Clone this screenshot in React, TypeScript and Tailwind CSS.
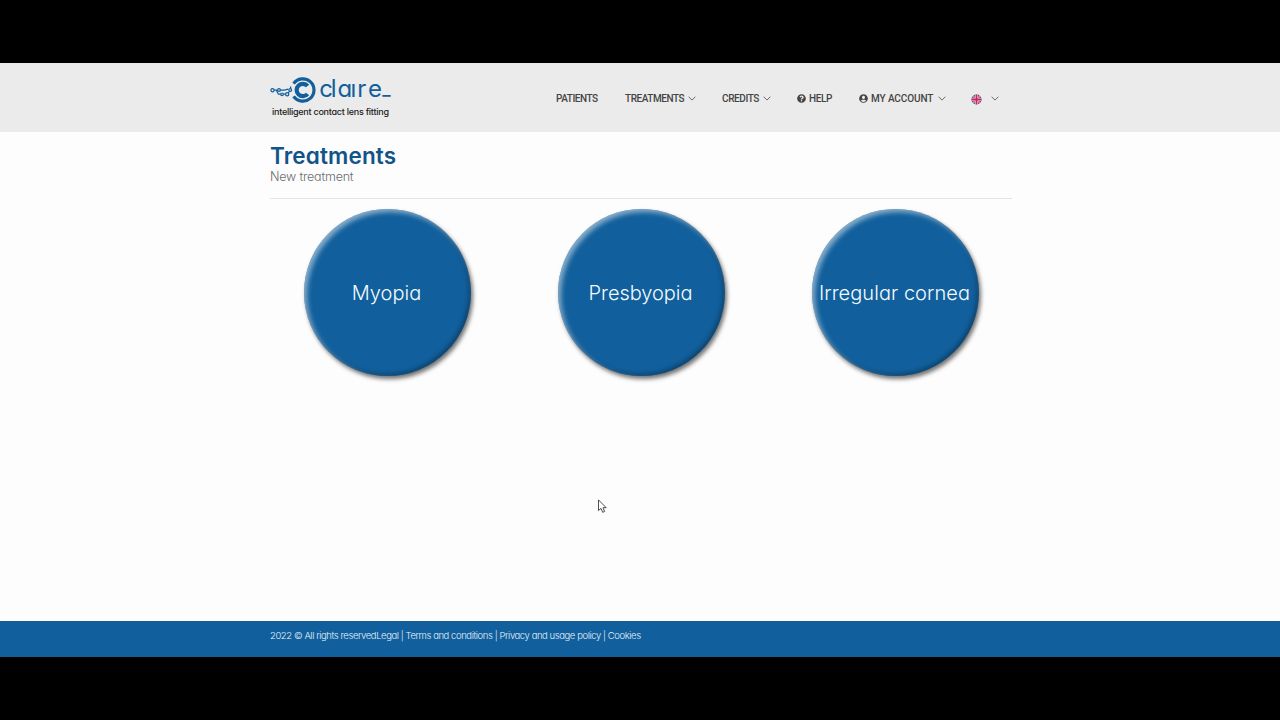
import { FaQuestionCircle, FaUserCircle } from "react-icons/fa";

const treatments = [
  { name: "Myopia", className: "tracking-[0px]" },
  { name: "Presbyopia", className: "tracking-[-0.05px]" },
  { name: "Irregular cornea", className: "tracking-[0.05px]" },
];

function Chevron() {
  return (
    <svg
      className="h-[5px] w-2 shrink-0"
      viewBox="0 0 8 5"
      fill="none"
      stroke="#5c5c5c"
      strokeWidth="0.9"
    >
      <path d="M0.6 0.7 4 4.1 7.4 0.7" />
    </svg>
  );
}

function Flag() {
  return (
    <svg className="mt-px size-[11px] shrink-0" viewBox="0 0 22 22">
      <defs>
        <clipPath id="flag">
          <circle cx="11" cy="11" r="10" />
        </clipPath>
      </defs>
      <g clipPath="url(#flag)">
        <rect width="22" height="22" fill="#4b569c" />
        <path d="M2 2 20 20M20 2 2 20" stroke="#d9c9df" strokeWidth="2.5" />
        <path d="M2 2 20 20M20 2 2 20" stroke="#c0507c" strokeWidth="1.2" />
        <path d="M11 0V22M0 11H22" stroke="#f0dfe8" strokeWidth="6" />
        <path d="M11 0V22M0 11H22" stroke="#d3224f" strokeWidth="3.6" />
      </g>
    </svg>
  );
}

function Logo() {
  return (
    <svg className="h-[46px] w-[124px] overflow-visible" viewBox="0 0 124 46">
      <g fill="none" stroke="#115f9c">
        <path d="M23.6 8.6A11.2 11.2 0 1 1 23.6 21.4" strokeWidth="3.2" />
        <path d="M37.6 11A6.2 6.2 0 1 0 37.6 19" strokeWidth="4.2" />
        <g strokeWidth="1.2">
          <circle cx="2.5" cy="15.2" r="1.6" />
          <circle cx="9" cy="15" r="1.4" />
          <circle cx="12" cy="19.3" r="1.3" />
          <circle cx="17.2" cy="19.2" r="1.6" />
          <circle cx="20.2" cy="15" r="1.4" />
          <path d="M4.1 15.2H7.6M10.4 15.2H14.5L18 14.2M6.5 15.4 8.4 19.2H10.7M13.3 19.2H15.6M18.2 17.8 19.6 16.3M20.6 11.5V13.6" />
        </g>
      </g>
      <text
        x="49.2 60.8 67.4 80.4 87.2 98"
        y="22.4"
        className="fill-[#115f9c] text-[24px] font-normal"
      >
        claıre
        <tspan x="112.2" y="19.9" className="text-[18px] font-medium">
          _
        </tspan>
      </text>
      <text
        x="2"
        y="40"
        textLength="117"
        className="fill-[#222222] text-[9px] font-medium"
      >
        intelligent contact lens fitting
      </text>
    </svg>
  );
}

function Header() {
  return (
    <header className="h-[69px] bg-[#ebebeb]">
      <div className="mx-auto flex w-[740px] justify-between">
        <div className="pt-3">
          <Logo />
        </div>
        <nav className="flex h-[71px] items-center pr-[11px] font-['Roboto',sans-serif] text-[10px] font-medium whitespace-nowrap text-[#444444]">
          <a className="w-[69px] tracking-[-0.45px]">PATIENTS</a>
          <a className="flex w-[97px] items-center gap-1 tracking-[-0.45px]">
            TREATMENTS <Chevron />
          </a>
          <a className="flex w-[75px] items-center gap-1 tracking-[-0.4px]">
            CREDITS <Chevron />
          </a>
          <a className="flex w-[62px] items-center gap-[3px] tracking-[-0.35px]">
            <FaQuestionCircle className="size-[9px]" /> HELP
          </a>
          <a className="flex w-[112px] items-center gap-[3px] tracking-[-0.1px]">
            <FaUserCircle className="size-[9px]" /> MY ACCOUNT
            <span className="pl-[2px]">
              <Chevron />
            </span>
          </a>
          <a className="flex items-center gap-[9px]">
            <Flag /> <Chevron />
          </a>
        </nav>
      </div>
    </header>
  );
}

export default function App() {
  return (
    <div className="flex h-[720px] w-[1280px] flex-col overflow-hidden bg-black py-[63px] font-['Inter',sans-serif] [font-feature-settings:'cv11']">
      <Header />
      <main className="relative grow bg-[#fdfdfd]">
        <div className="mx-auto w-[740px]">
          <div className="h-[67px] w-[742px] border-b border-[#e4e4e4] pt-[11px]">
            <h1 className="text-[22.5px] leading-[26px] font-semibold tracking-[0.15px] text-[#115488]">
              Treatments
            </h1>
            <p className="text-[12.5px] leading-4 font-light tracking-[-0.2px] text-[#6c6c6c]">
              New treatment
            </p>
          </div>
          <div className="-mx-[10px] grid w-[762px] grid-cols-3 justify-items-center pt-[9.5px]">
            {treatments.map((item) => (
              <button
                key={item.name}
                className="flex size-[167px] items-center justify-center rounded-full bg-[#115f9c] pt-px pr-px text-xl font-light whitespace-nowrap text-[#f2fbff] shadow-[2px_3px_4px_rgba(0,0,0,0.55),inset_3px_3px_5px_rgba(255,255,255,0.5),inset_-2px_-2px_4px_rgba(0,0,0,0.3)]"
              >
                <span className={item.className}>{item.name}</span>
              </button>
            ))}
          </div>
        </div>
        <svg
          className="absolute top-[367px] left-[597px] h-[15px] w-[10px]"
          viewBox="0 0 10 15"
          fill="#ffffff"
          stroke="#3c3c3c"
          strokeWidth="0.9"
        >
          <path d="M1.5 0.9V11.6L4 9.4 5.7 13.3 7.6 12.5 6 8.7H9.2Z" />
        </svg>
      </main>
      <footer className="h-9 bg-[#115f9c]">
        <p className="mx-auto w-[740px] pt-[7px] text-[9.5px] leading-[15px] font-light tracking-[-0.43px] text-[#e3f1fb]">
          2022 © All rights reservedLegal | Terms and conditions | Privacy and
          usage policy | Cookies
        </p>
      </footer>
    </div>
  );
}
